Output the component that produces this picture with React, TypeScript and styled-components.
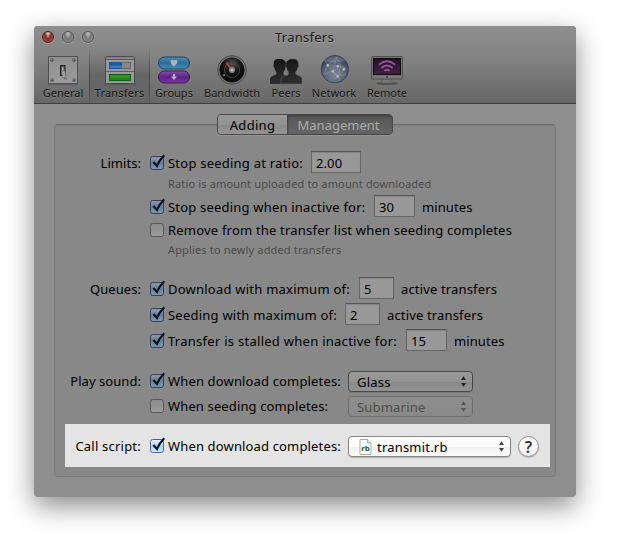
import React from 'react';
import styled, { createGlobalStyle, css } from 'styled-components';

const GlobalStyle = createGlobalStyle`
  * { box-sizing: border-box; }
  html, body { margin: 0; padding: 0; background: #fff; }
  body { font: 13px/22px "Noto Sans", "Open Sans", sans-serif; color: #000; overflow: hidden; }
`;

const Desktop = styled.div`
  height: 543px;
  padding: 26px 0 0 34px;
  overflow: hidden;
`;

const Window = styled.main`
  width: 542px;
  height: 471px;
  border-radius: 4px;
  background: #8e8e8e;
  box-shadow: 0 9px 27px rgba(0, 0, 0, 0.46);
`;

const Header = styled.header`
  height: 78px;
  border-radius: 4px 4px 0 0;
  border-bottom: 1px solid #3f3f3f;
  background: linear-gradient(#8f8f8f, #7f7f7f 50%, #676767);
`;

const TitleBar = styled.div`
  display: grid;
  grid-template-columns: 60px 1fr 60px;
  height: 23px;
  padding-left: 8px;
`;

const Lights = styled.div`
  display: flex;
  gap: 8px;
  padding-top: 5px;
`;

const Light = styled.span<{ $red?: boolean }>`
  width: 12px;
  height: 12px;
  border-radius: 50%;
  border: 1px solid ${p => (p.$red ? '#4d2220' : '#555')};
  background: ${p =>
    p.$red
      ? 'radial-gradient(ellipse at 50% 12%, #cdb0ae 0 12%, #8b302c 42%, #a23c36 70%, #b96a64)'
      : 'radial-gradient(ellipse at 50% 12%, #b5b5b5 0 12%, #757575 45%, #8b8b8b 75%, #a0a0a0)'};
  box-shadow: 0 1px 0 rgba(255, 255, 255, 0.2);
`;

const Title = styled.h1`
  margin: 0 9px 0 0;
  font-size: 13px;
  line-height: 23px;
  font-weight: 400;
  letter-spacing: 0.25px;
  text-align: center;
  color: #1c1c1c;
  text-shadow: 0 1px 0 rgba(255, 255, 255, 0.2);
`;

const Toolbar = styled.nav`
  display: flex;
  height: 54px;
  padding-left: 3px;
`;

const Tool = styled.div<{ $w: number; $active?: boolean }>`
  display: flex;
  flex-direction: column;
  align-items: center;
  width: ${p => p.$w}px;
  padding-top: 4px;
  ${p =>
    p.$active &&
    css`
      border: solid;
      border-width: 0 1px;
      border-image: linear-gradient(rgba(60, 60, 60, 0), #484848 45%, #484848 75%, rgba(60, 60, 60, 0.2)) 1;
      background: linear-gradient(rgba(0, 0, 0, 0), rgba(0, 0, 0, 0.15) 50%, rgba(0, 0, 0, 0.02));
    `}
  svg { display: block; width: 34px; height: 34px; flex: none; }
`;

const ToolLabel = styled.span<{ $ls?: number }>`
  font-size: 11px;
  line-height: 14px;
  margin-top: -1px;
  white-space: nowrap;
  letter-spacing: ${p => p.$ls ?? 0}px;
  color: #151515;
  text-shadow: 0 1px 0 rgba(255, 255, 255, 0.18);
`;

const Content = styled.section`
  padding: 10px 20px 0;
`;

const Tabs = styled.div`
  display: flex;
  position: relative;
  z-index: 1;
  width: 176px;
  height: 21px;
  margin: 0 auto -11px 163px;
  border: 1px solid #484848;
  border-radius: 4px;
  overflow: hidden;
  box-shadow: 0 1px 0 rgba(255, 255, 255, 0.1);
`;

const Tab = styled.div<{ $w: number; $active?: boolean }>`
  width: ${p => p.$w}px;
  padding-right: ${p => (p.$active ? 2 : 0)}px;
  line-height: 20px;
  text-align: center;
  letter-spacing: ${p => (p.$active ? 0 : 0.3)}px;
  color: ${p => (p.$active ? '#a9a9a9' : '#000')};
  background: ${p => (p.$active ? 'linear-gradient(#505050, #5c5c5c 30%, #646464)' : 'linear-gradient(#989898, #929292 50%, #8a8a8a 51%, #939393)')};
  box-shadow: ${p => (p.$active ? 'inset 1px 1px 2px #404040' : 'none')};
`;

const Group = styled.div`
  width: 502px;
  height: 353px;
  padding: 26px 5px 0 10px;
  border: 1px solid #7b7b7b;
  border-top-color: #6c6c6c;
  border-radius: 4px;
  background: #888;
  box-shadow: inset 0 1px 1px rgba(0, 0, 0, 0.08);
`;

const Row = styled.div<{ $mt?: number }>`
  display: grid;
  grid-template-columns: 76px 14px 1fr;
  column-gap: 9px;
  height: 22px;
  line-height: 24px;
  margin-top: ${p => p.$mt ?? 0}px;
`;

const Highlight = styled.div`
  width: 485px;
  height: 43px;
  margin-top: 8px;
  padding-top: 10px;
  background: #e4e4e4;
`;

const RowLabel = styled.div<{ $ls?: number }>`
  text-align: right;
  white-space: nowrap;
  letter-spacing: ${p => p.$ls ?? 0.05}px;
`;

const Check = styled.svg`
  display: block;
  width: 16px;
  height: 18px;
  margin-top: 3px;
  overflow: visible;
`;

const Field = styled.div`
  display: flex;
  margin-left: -5px;
  white-space: pre;
`;

const Text = styled.span<{ $w?: number; $ls?: number }>`
  flex: none;
  width: ${p => (p.$w ? `${p.$w}px` : 'auto')};
  letter-spacing: ${p => p.$ls ?? 0.2}px;
`;

const Note = styled.div<{ $up?: boolean }>`
  height: 22px;
  margin-left: 103px;
  font-size: 11px;
  line-height: ${p => (p.$up ? 20 : 22)}px;
  letter-spacing: 0.15px;
  color: #4c4c4c;
`;

const NumberBox = styled.span<{ $w: number }>`
  flex: none;
  width: ${p => p.$w}px;
  height: 22px;
  margin-right: 7px;
  padding-left: 4px;
  border: 1px solid #666;
  border-top-color: #575757;
  background: #989898;
  box-shadow: inset 0 1px 1px rgba(0, 0, 0, 0.12);
  line-height: 22px;
  letter-spacing: 0.1px;
`;

type SelectTone = 'dim' | 'off' | 'lit';
const selectTones = {
  dim: css`
    border-color: #494949;
    background: linear-gradient(#989898, #939393 50%, #8a8a8a 52%, #929292);
    box-shadow: 0 1px 0 rgba(0, 0, 0, 0.13);
  `,
  off: css`
    border-color: #6f6f6f;
    background: linear-gradient(#8e8e8e, #898989);
    color: #4e4e4e;
  `,
  lit: css`
    border-color: #858585;
    background: linear-gradient(#fff, #fafafa 50%, #f0f0f0 52%, #fbfbfb);
    box-shadow: 0 1px 1px rgba(0, 0, 0, 0.2);
  `,
};

const SelectBox = styled.div<{ $w: number; $tone: SelectTone }>`
  display: flex;
  align-items: center;
  width: ${p => p.$w}px;
  height: 21px;
  margin-top: 2px;
  padding: 0 5px 0 8px;
  border: 1px solid;
  border-radius: 4px;
  ${p => selectTones[p.$tone]}
`;

const SelectText = styled.span`
  flex: 1;
  letter-spacing: 0.2px;
  line-height: 18px;
`;

const Arrows = styled.svg`
  width: 7px;
  height: 13px;
`;

const FileIcon = styled.svg`
  width: 13px;
  height: 16px;
  margin: 0 5px 0 2px;
`;

const Help = styled.div`
  width: 21px;
  height: 21px;
  margin: 2px 0 0 7px;
  border: 1px solid #8b8b8b;
  border-radius: 50%;
  background: linear-gradient(#fff, #f2f2f2);
  box-shadow: 0 1px 1px rgba(0, 0, 0, 0.2);
  font-size: 16px;
  font-weight: 600;
  line-height: 20px;
  text-align: center;
  color: #333;
`;

function Checkbox({ on, lit }: { on?: boolean; lit?: boolean }) {
  const id = lit ? 'cbLit' : on ? 'cbOn' : 'cbOff';
  const stops = lit ? ['#eef6ff', '#a9cdf2', '#c8f0ff'] : on ? ['#929ba8', '#66809a', '#7d9cac'] : ['#8e8e8e', '#929292', '#9d9d9d'];
  return (
    <Check viewBox="0 0 16 18">
      <defs>
        <linearGradient id={id} x2="0" y2="1">
          <stop stopColor={stops[0]} />
          <stop offset=".5" stopColor={stops[1]} />
          <stop offset="1" stopColor={stops[2]} />
        </linearGradient>
      </defs>
      <rect x=".5" y="2.5" width="13" height="13" rx="2.2" fill={`url(#${id})`} stroke={lit ? '#5462a0' : on ? '#343e63' : '#575757'} />
      {on && <path d="M3.4 8.1 7 11.9Q9.5 6 14.2 1.2" fill="none" stroke="#0b1322" strokeWidth="2.2" />}
    </Check>
  );
}

function Select({ w, tone, icon, children }: { w: number; tone: SelectTone; icon?: React.ReactNode; children: string }) {
  const c = tone === 'off' ? '#555' : tone === 'lit' ? '#444' : '#222';
  return (
    <SelectBox $w={w} $tone={tone}>
      {icon}
      <SelectText>{children}</SelectText>
      <Arrows viewBox="0 0 7 13">
        <path d="M3.5 1.200 6 5H1zM3.5 11.800 6 8H1z" fill={c} />
      </Arrows>
    </SelectBox>
  );
}

const GeneralIcon = () => (
  <svg viewBox="0 0 34 34">
    <defs>
      <linearGradient id="plate" x2="0" y2="1"><stop stopColor="#8e8e8e" /><stop offset="1" stopColor="#9c9c9c" /></linearGradient>
    </defs>
    <rect x="2" y="31" width="30" height="1.500" fill="#444" opacity=".35" />
    <rect x="2.500" y="3.500" width="29" height="27" fill="url(#plate)" stroke="#505050" />
    {[[6, 7], [28, 7], [6, 27], [28, 27]].map(([x, y]) => (
      <g key={`${x}-${y}`}><circle cx={x} cy={y} r="1.7" fill="#4d4d4d" /><circle cx={x - .3} cy={y - .4} r=".8" fill="#8d8d8d" /></g>
    ))}
    <rect x="14.500" y="12.500" width="4.500" height="10" fill="#555" stroke="#242424" />
    <path d="M16 14h1.500v4H16z" fill="#aaa" />
    <path d="M15.500 18h3.500l1 6.500h-3.500z" fill="#a2a2a2" stroke="#666" strokeWidth=".6" />
    <path d="m17.500 25 3 0 1 1.500-2 0z" fill="#333" opacity=".5" />
  </svg>
);

const TransfersIcon = () => (
  <svg viewBox="0 0 34 34">
    <rect x="1.500" y="30" width="31" height="2" fill="#333" opacity=".3" />
    <rect x="2.500" y="3.500" width="29" height="27" rx="1" fill="#989898" stroke="#4c4c4c" />
    <path d="M3 4h28v2H3z" fill="#858585" />
    <path d="M3 6.500h28M3 18.500h28" stroke="#5d5d5d" />
    <rect x="6.500" y="9.500" width="21" height="6" fill="#888" stroke="#666" />
    <rect x="6" y="9" width="13" height="7" fill="#2354a0" />
    <path d="M7 12.500h12V15H7z" fill="#387db0" />
    <rect x="6.500" y="21.500" width="21" height="6" fill="#218021" stroke="#155e16" />
    <path d="M7 22.500h20v2H7z" fill="#3b9b2b" />
  </svg>
);

const GroupsIcon = () => (
  <svg viewBox="0 0 34 34">
    <defs>
      <linearGradient id="blueCap" x2="0" y2="1"><stop stopColor="#528aae" /><stop offset=".5" stopColor="#2b6c9f" /><stop offset="1" stopColor="#4190b8" /></linearGradient>
      <linearGradient id="purpleCap" x2="0" y2="1"><stop stopColor="#8251a3" /><stop offset=".5" stopColor="#5b2388" /><stop offset="1" stopColor="#7d35a4" /></linearGradient>
    </defs>
    <rect x="1.500" y="4" width="31" height="12" rx="6" fill="url(#blueCap)" stroke="#24465d" />
    <rect x="1.500" y="18" width="31" height="12" rx="6" fill="url(#purpleCap)" stroke="#3c2051" />
    <path d="M17 13.500C12.500 10 13 6.800 15.200 6.800c1.100 0 1.800 1 1.800 1s.7-1 1.800-1c2.200 0 2.700 3.200-1.800 6.700z" fill="#aeb3b7" />
    <path d="M16 21h2v2.500h2l-3 3.500-3-3.500h2z" fill="#b9b1bc" />
  </svg>
);

const BandwidthIcon = () => (
  <svg viewBox="0 0 34 34">
    <defs>
      <radialGradient id="dial" cx=".5" cy=".25"><stop stopColor="#555" /><stop offset=".6" stopColor="#1d1d1d" /><stop offset="1" stopColor="#0b0b0b" /></radialGradient>
    </defs>
    <circle cx="17" cy="17" r="14.300" fill="#7a7a7a" stroke="#484848" />
    <circle cx="17" cy="17" r="12.200" fill="url(#dial)" stroke="#191919" />
    <circle cx="17" cy="17" r="7.500" fill="none" stroke="#454545" />
    <path d="m16 16-5-5.500 1.500-.8z" fill="#c74420" stroke="#b83d1e" />
    <circle cx="17" cy="17" r="3" fill="#888" /><circle cx="17" cy="17" r="1.300" fill="#c1c1c1" />
    <circle cx="9" cy="22" r=".9" fill="#999" />
  </svg>
);

const PeersIcon = () => (
  <svg viewBox="0 0 34 34">
    <defs>
      <linearGradient id="peer" x2="0" y2="1"><stop stopColor="#161616" /><stop offset="1" stopColor="#303030" /></linearGradient>
      <path id="bust" d="M9.500 6C6 6 4.400 8 4.700 11.500c-.7 1-.1 2.500.6 3 .4 2.500 1.200 3.500 2 4.500v2C5 23 1 23.500 1 26v5h21v-5c0-2.500-6-3-7.500-4.500V19c.8-1 1.600-2 2-4.500.7-.5 1.300-2 .6-3C17.400 8 14 6 11 6z" />
    </defs>
    <use href="#bust" fill="url(#peer)" />
    <g transform="translate(34 0) scale(-1 1)"><use href="#bust" fill="url(#peer)" stroke="#606060" strokeWidth=".6" /></g>
  </svg>
);

const NetworkIcon = () => (
  <svg viewBox="0 0 34 34">
    <defs>
      <radialGradient id="globe" cx=".5" cy=".68" r=".62"><stop stopColor="#7f8793" /><stop offset=".65" stopColor="#596376" /><stop offset="1" stopColor="#343e55" /></radialGradient>
    </defs>
    <g transform="translate(.8 -.8)">
      <circle cx="17" cy="17" r="13.700" fill="url(#globe)" stroke="#353e50" strokeWidth=".8" />
      <path d="M6 8.500Q17-1 28 8.500Q17 12 6 8.500z" fill="#a3a8b2" opacity=".35" />
      <path d="M10 13 19 5l4 9 5 2-8 8-5-5zm0 0L6 22l9-3 7 8M19 5l-4 14 8-5-3 10-5 4M10 13l13 1M7 8l3 5M20 24l8-2" fill="none" stroke="#b2b7c0" strokeWidth=".5" opacity=".6" />
      {[[10, 13], [20, 14], [15, 19], [26, 17], [20, 24]].map(([x, y]) => <circle key={x + y * 40} cx={x} cy={y} r="1.200" fill="#b9bec7" />)}
    </g>
  </svg>
);

const RemoteIcon = () => (
  <svg viewBox="0 0 34 34">
    <defs>
      <linearGradient id="screen" x2="0" y2="1"><stop stopColor="#241127" /><stop offset="1" stopColor="#43223f" /></linearGradient>
    </defs>
    <ellipse cx="17" cy="30.500" rx="11" ry="1.600" fill="#3c3c3c" opacity=".6" />
    <path d="m12.500 26-1 4h11l-1-4z" fill="#777" stroke="#555" strokeWidth=".6" />
    <rect x="1.500" y="3.500" width="31" height="22.500" rx="1" fill="#777" stroke="#505050" />
    <rect x="3.500" y="5.500" width="27" height="16" fill="url(#screen)" stroke="#0e0710" />
    <circle cx="17" cy="24" r="1" fill="#46341f" />
    <g fill="none" stroke="#91529a" strokeWidth="1.900" strokeLinecap="round">
      <path d="M9.500 11.300Q17 5.300 24.500 11.300" /><path d="M12 14.600Q17 10.600 22 14.600" /><path d="M15 17.500Q17 16 19 17.500" />
    </g>
  </svg>
);

export default function App() {
  return (
    <>
      <GlobalStyle />
      <Desktop>
        <Window>
          <Header>
            <TitleBar>
              <Lights><Light $red /><Light /><Light /></Lights>
              <Title>Transfers</Title>
            </TitleBar>
            <Toolbar>
              <Tool $w={52}><GeneralIcon /><ToolLabel>General</ToolLabel></Tool>
              <Tool $w={61} $active><TransfersIcon /><ToolLabel $ls={0.2}>Transfers</ToolLabel></Tool>
              <Tool $w={48}><GroupsIcon /><ToolLabel>Groups</ToolLabel></Tool>
              <Tool $w={68}><BandwidthIcon /><ToolLabel>Bandwidth</ToolLabel></Tool>
              <Tool $w={40}><PeersIcon /><ToolLabel>Peers</ToolLabel></Tool>
              <Tool $w={56}><NetworkIcon /><ToolLabel>Network</ToolLabel></Tool>
              <Tool $w={50}><RemoteIcon /><ToolLabel>Remote</ToolLabel></Tool>
            </Toolbar>
          </Header>
          <Content>
            <Tabs>
              <Tab $w={69}>Adding</Tab>
              <Tab $w={105} $active>Management</Tab>
            </Tabs>
            <Group>
              <Row>
                <RowLabel>Limits:</RowLabel><Checkbox on />
                <Field><Text $w={143} $ls={0.23}>Stop seeding at ratio:</Text><NumberBox $w={50}>2.00</NumberBox></Field>
              </Row>
              <Note>Ratio is amount uploaded to amount downloaded</Note>
              <Row>
                <RowLabel /><Checkbox on />
                <Field><Text $w={206}>Stop seeding when inactive for:</Text><NumberBox $w={41}>30</NumberBox><Text $ls={0.1}>minutes</Text></Field>
              </Row>
              <Row $mt={1}>
                <RowLabel /><Checkbox />
                <Field><Text>Remove from the transfer list when seeding completes</Text></Field>
              </Row>
              <Note $up>Applies to newly added transfers</Note>
              <Row $mt={15}>
                <RowLabel>Queues:</RowLabel><Checkbox on />
                <Field><Text $w={191} $ls={0.23}>Download with maximum of:</Text><NumberBox $w={35}>5</NumberBox><Text $ls={0.15}>active transfers</Text></Field>
              </Row>
              <Row $mt={4}>
                <RowLabel /><Checkbox on />
                <Field><Text $w={177} $ls={0.23}>Seeding with maximum of:</Text><NumberBox $w={35}>2</NumberBox><Text $ls={0.15}>active transfers</Text></Field>
              </Row>
              <Row $mt={4}>
                <RowLabel /><Checkbox on />
                <Field><Text $w={238} $ls={0.27}>Transfer is stalled when inactive for:</Text><NumberBox $w={41}>15</NumberBox><Text $ls={0.1}>minutes</Text></Field>
              </Row>
              <Row $mt={18}>
                <RowLabel>Play sound:</RowLabel><Checkbox on />
                <Field><Text $w={180} $ls={0.15}>When download completes:</Text><Select w={125} tone="dim">Glass</Select></Field>
              </Row>
              <Row $mt={3}>
                <RowLabel /><Checkbox />
                <Field><Text $w={180} $ls={0.13}>When seeding completes:</Text><Select w={125} tone="off">Submarine</Select></Field>
              </Row>
              <Highlight>
                <Row>
                  <RowLabel $ls={0.22}>Call script:</RowLabel><Checkbox on lit />
                  <Field>
                    <Text $w={180} $ls={0.15}>When download completes:</Text>
                    <Select
                      w={163}
                      tone="lit"
                      icon={
                        <FileIcon viewBox="0 0 13 16">
                          <path d="M1 .5h7.500L12 4v11.500H1z" fill="#fdfdfd" stroke="#aaa" />
                          <path d="M8.500.5V4H12" fill="#e4e4e4" stroke="#aaa" />
                          <text x="6.600" y="12.300" textAnchor="middle" fontFamily="DejaVu Sans, sans-serif" fontWeight="700" fontSize="7" fill="#1d5a22">rb</text>
                        </FileIcon>
                      }
                    >transmit.rb</Select>
                    <Help>?</Help>
                  </Field>
                </Row>
              </Highlight>
            </Group>
          </Content>
        </Window>
      </Desktop>
    </>
  );
}
